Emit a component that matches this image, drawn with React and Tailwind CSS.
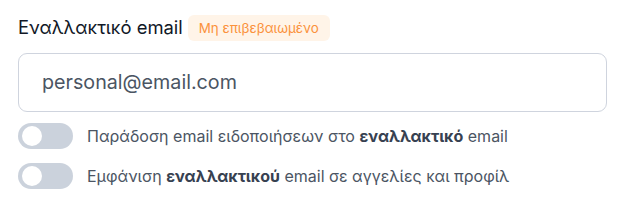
import React from "react";

function Toggle() {
  return (
    <div className="relative h-[26px] w-[55px] shrink-0 rounded-full bg-[#cbd2dc]">
      <div className="absolute left-[4px] top-[3px] h-[20px] w-[20px] rounded-full bg-white" />
    </div>
  );
}

export default function App() {
  return (
    <div className="w-[634px] h-[212px] bg-white px-[18px] pt-[15px]" style={{ fontFamily: "Inter, 'Noto Sans', sans-serif" }}>
      <div className="flex items-center gap-[5px] h-[26px]">
        <span className="text-[18.4px] text-[#111827]">Εναλλακτικό email</span>
        <span className="rounded-[6px] bg-[#fff4e8] px-[11px] h-[26px] flex items-center text-[13.4px] text-[#fb923c]">Μη επιβεβαιωμένο</span>
      </div>
      <div className="mt-[12px] h-[59px] w-[589px] rounded-[9px] border border-[#cfd4de] flex items-center px-[23px] text-[19.7px] text-[#4b5563]">
        personal@email.com
      </div>
      <div className="mt-[11px] flex flex-col gap-[14px]">
        <div className="flex items-center gap-[14px]">
          <Toggle />
          <span className="text-[16px] text-[#4b5563]">Παράδοση email ειδοποιήσεων στο <b className="font-bold text-[#374151]">εναλλακτικό</b> email</span>
        </div>
        <div className="flex items-center gap-[14px]">
          <Toggle />
          <span className="text-[16px] text-[#4b5563]">Εμφάνιση <b className="font-bold text-[#374151]">εναλλακτικού</b> email σε αγγελίες και προφίλ</span>
        </div>
      </div>
    </div>
  );
}
